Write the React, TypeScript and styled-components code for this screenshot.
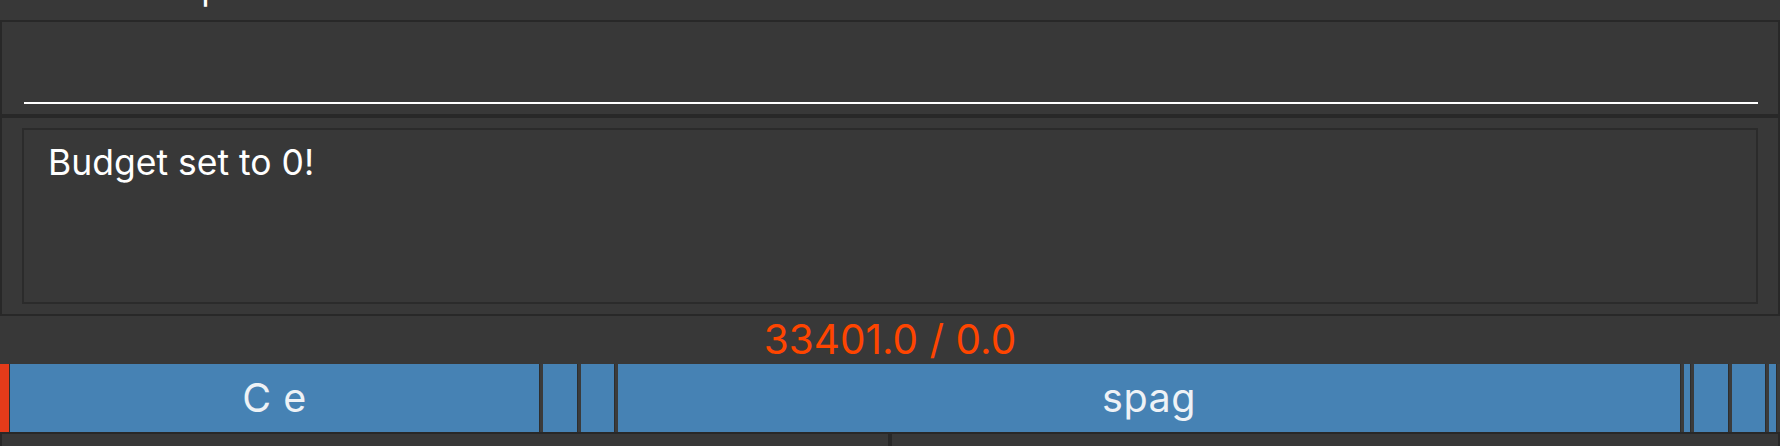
import styled, { createGlobalStyle } from "styled-components";

const GlobalStyle = createGlobalStyle`
  html, body {
    margin: 0;
    padding: 0;
    background: #383838;
  }
  body {
    font-family: Inter, "Liberation Sans", sans-serif;
    overflow: hidden;
  }
`;

type Slice = { w: number; label?: string };

// blue width of each slice; every slice is followed by a 1px edge and a 3px gap
const slices: Slice[] = [
  { w: 529, label: "C e" },
  { w: 34 },
  { w: 33 },
  { w: 1062, label: "spag" },
  { w: 6 },
  { w: 34 },
  { w: 33 },
  { w: 7 },
];

export default function App() {
  return (
    <>
      <GlobalStyle />
      <Page>
        <Header>
          <HeaderTitle>Ask for help</HeaderTitle>
        </Header>
        <InputPanel>
          <PromptInput aria-label="prompt" />
        </InputPanel>
        <OutputPanel>
          <MessageBox>Budget set to 0!</MessageBox>
        </OutputPanel>
        <Total>33401.0 / 0.0</Total>
        <Bar>
          <Marker />
          {slices.map((s, i) => (
            <Segment key={i} $w={s.w}>
              {s.label}
            </Segment>
          ))}
        </Bar>
        <Footer>
          <FooterPane />
          <FooterPane />
        </Footer>
      </Page>
    </>
  );
}

const Page = styled.div`
  width: 1780px;
  height: 446px;
  display: flex;
  flex-direction: column;
  background: #383838;
  overflow: hidden;
`;

const Header = styled.div`
  flex: 0 0 20px;
  overflow: hidden;
  padding-left: 24px;
`;

const HeaderTitle = styled.div`
  font-size: 35px;
  line-height: 35px;
  margin-top: -30px;
  color: #ffffff;
  white-space: nowrap;
`;

const InputPanel = styled.section`
  flex: 0 0 94px;
  box-sizing: border-box;
  border: 2px solid #282828;
  border-bottom: none;
  padding: 0 20px 10px 22px;
  display: flex;
  align-items: flex-end;
`;

const PromptInput = styled.input`
  flex: 1;
  height: 44px;
  box-sizing: border-box;
  margin: 0;
  padding: 0;
  background: transparent;
  border: none;
  border-bottom: 2px solid #ffffff;
  outline: none;
  color: #ffffff;
  font: 34px Inter, "Liberation Sans", sans-serif;
`;

const OutputPanel = styled.section`
  flex: 0 0 202px;
  box-sizing: border-box;
  border: 2px solid #282828;
  border-top-width: 4px;
  padding: 10px 20px;
  display: flex;
  flex-direction: column;
`;

const MessageBox = styled.div`
  flex: 1;
  border: 2px solid #2b2b2b;
  padding: 12px 24px;
  font-size: 35.5px;
  line-height: 1.17;
  color: #ffffff;
`;

const Total = styled.div`
  flex: 0 0 48px;
  line-height: 48px;
  text-align: center;
  font-size: 40.5px;
  color: #ff4500;
`;

const Bar = styled.div`
  flex: 0 0 68px;
  display: flex;
  background: #3b3b3b;
`;

const Marker = styled.div`
  flex: 0 0 9px;
  background: #e43b1a;
  border-right: 1px solid #2d2d2d;
`;

const Segment = styled.div<{ $w: number }>`
  flex: 0 0 ${(p) => p.$w}px;
  margin-right: 3px;
  border-right: 1px solid #2d2d2d;
  background: #4682b4;
  color: #eef2f6;
  font-size: 39.5px;
  line-height: 68px;
  text-align: center;
  white-space: nowrap;
  overflow: hidden;
  letter-spacing: 0.5px;
`;

const Footer = styled.div`
  flex: 1;
  display: flex;
`;

const FooterPane = styled.div`
  flex: 1;
  border: 2px solid #282828;
  border-bottom: none;
`;
